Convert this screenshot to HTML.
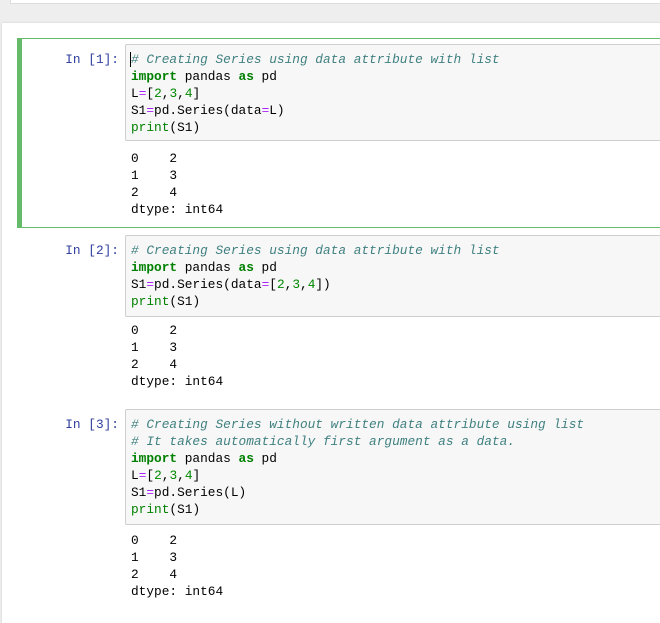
<!DOCTYPE html><html><head><style>
body{margin:0;width:660px;height:618px;background:#eee;position:relative;overflow:hidden;font-family:"Liberation Mono",monospace;font-size:12.8px}
.top{position:absolute;left:10px;top:0;width:660px;height:3px;background:#fff;border-bottom:1px solid #ddd;border-left:1px solid #ddd}
.page{position:absolute;left:2px;top:23px;width:670px;height:600px;background:#fff;box-shadow:0 0 2px #ccc}
.cell{position:absolute;left:17px;width:660px}
.sel{border:1px solid #66bb6a;border-left:5px solid #66bb6a}
.p{position:absolute;width:100px;text-align:right;color:#303F9F;font-size:12.8px}
.in{position:absolute;left:125px;width:540px;background:#f7f7f7;border:1px solid #cfcfcf;border-radius:2px;padding:6px 5px;line-height:17px;white-space:pre}
.out{position:absolute;left:131px;line-height:17px;white-space:pre;color:#000}
.c{color:#408080;font-style:italic}.k{color:#008000;font-weight:bold}.n{color:#080}.o{color:#a2f}.b{color:#008000}
</style></head><body>
<div class="top"></div>
<div class="page"></div>
<div class="cell sel" style="top:38px;height:188px;left:17px;width:660px"></div>
<div class="p" style="left:19px;top:52px">In [1]:</div>
<div class="in" style="top:44px;height:83px"><span style="border-left:1px solid #000;margin-left:-1px"></span><span class="c"># Creating Series using data attribute with list</span>
<span class="k">import</span> pandas <span class="k">as</span> pd
L<span class="o">=</span>[<span class="n">2</span>,<span class="n">3</span>,<span class="n">4</span>]
S1<span class="o">=</span>pd.Series(data<span class="o">=</span>L)
<span class="b">print</span>(S1)</div>
<div class="out" style="top:150px">0    2
1    3
2    4
dtype: int64</div>

<div class="p" style="left:19px;top:243px">In [2]:</div>
<div class="in" style="top:235px;height:68px"><span class="c"># Creating Series using data attribute with list</span>
<span class="k">import</span> pandas <span class="k">as</span> pd
S1<span class="o">=</span>pd.Series(data<span class="o">=</span>[<span class="n">2</span>,<span class="n">3</span>,<span class="n">4</span>])
<span class="b">print</span>(S1)</div>
<div class="out" style="top:322px">0    2
1    3
2    4
dtype: int64</div>

<div class="p" style="left:19px;top:417px">In [3]:</div>
<div class="in" style="top:409px;height:102px"><span class="c"># Creating Series without written data attribute using list</span>
<span class="c"># It takes automatically first argument as a data.</span>
<span class="k">import</span> pandas <span class="k">as</span> pd
L<span class="o">=</span>[<span class="n">2</span>,<span class="n">3</span>,<span class="n">4</span>]
S1<span class="o">=</span>pd.Series(L)
<span class="b">print</span>(S1)</div>
<div class="out" style="top:532px">0    2
1    3
2    4
dtype: int64</div>
</body></html>
